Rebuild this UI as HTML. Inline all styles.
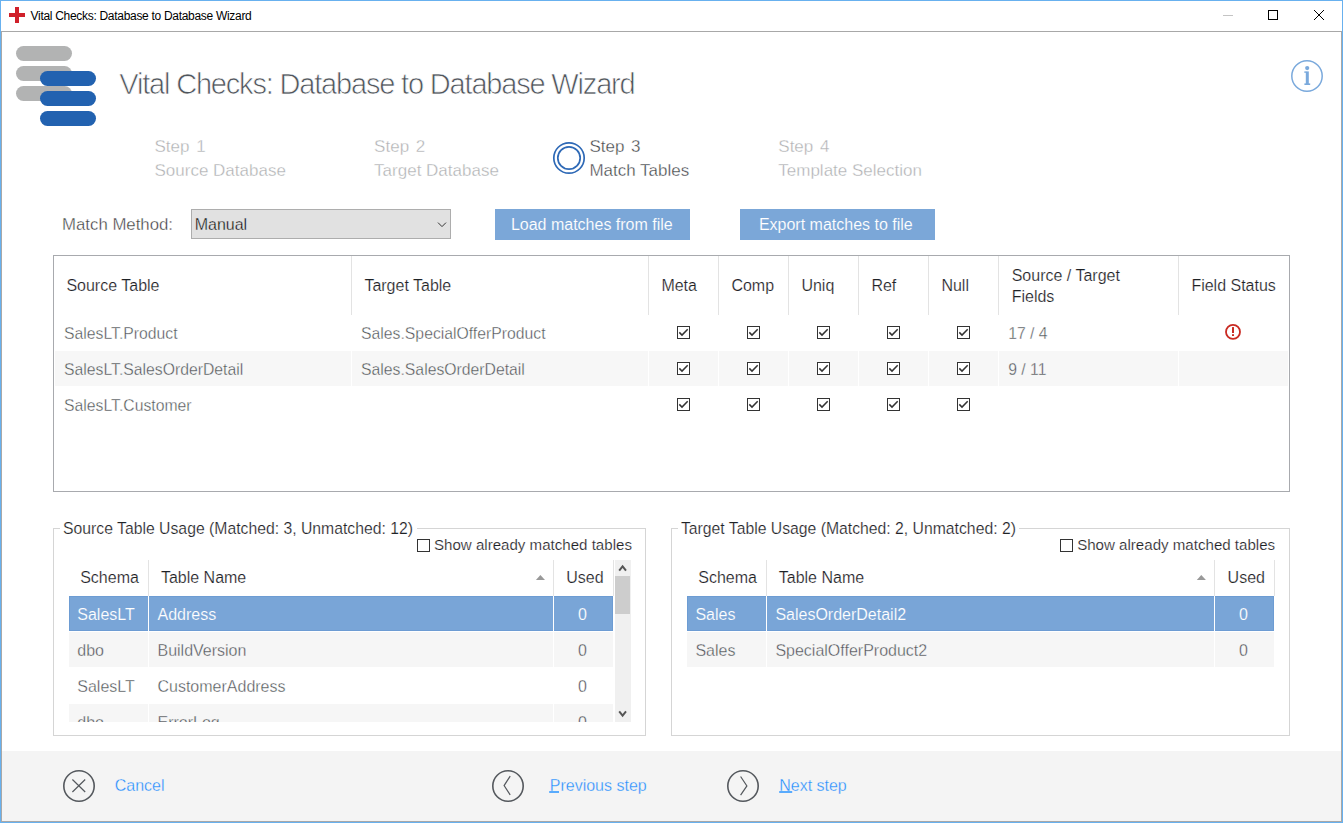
<!DOCTYPE html><html><head><meta charset="utf-8"><style>
*{margin:0;padding:0;box-sizing:border-box}
html,body{width:1343px;height:823px;overflow:hidden;background:#fff;font-family:"Liberation Sans",sans-serif}
.t{position:absolute;white-space:nowrap;line-height:0}
.r{position:absolute}
svg{position:absolute;left:0;top:0}
</style></head><body><div class="r" style="left:0px;top:0px;width:1343px;height:823px;background:#fff;"></div>
<div class="r" style="left:1px;top:31px;width:1341px;height:1px;background:#a8a8a8;"></div>
<div class="r" style="left:1px;top:31px;width:1px;height:791px;background:#a8a8a8;"></div>
<div class="r" style="left:1341px;top:31px;width:1px;height:791px;background:#a8a8a8;"></div>
<div class="r" style="left:1px;top:821px;width:1341px;height:1px;background:#a8a8a8;"></div>
<div class="r" style="left:0px;top:0px;width:1343px;height:1px;background:#68b1ef;"></div>
<div class="r" style="left:0px;top:0px;width:1px;height:823px;background:#68b1ef;"></div>
<div class="r" style="left:1342px;top:0px;width:1px;height:823px;background:#68b1ef;"></div>
<div class="r" style="left:0px;top:822px;width:1343px;height:1px;background:#68b1ef;"></div>
<div class="r" style="left:15px;top:7px;width:4px;height:16px;background:#d0202a;"></div>
<div class="r" style="left:9px;top:13px;width:16px;height:4px;background:#d0202a;"></div>
<div class="t" style="left:30.56px;top:15.74px;font-size:12px;color:#000;letter-spacing:-0.3px">Vital Checks: Database to Database Wizard</div>
<div class="r" style="left:1223px;top:15px;width:10px;height:1px;background:#c4c4c4;"></div>
<div class="r" style="left:1268px;top:10px;width:10px;height:10px;background:transparent;border:1px solid #000"></div>
<div class="r" style="left:16px;top:46px;width:56px;height:15px;background:#b2b3b3;border-radius:7.5px"></div>
<div class="r" style="left:16px;top:66px;width:56px;height:15px;background:#b2b3b3;border-radius:7.5px"></div>
<div class="r" style="left:16px;top:86px;width:56px;height:15px;background:#b2b3b3;border-radius:7.5px"></div>
<div class="r" style="left:40px;top:71px;width:56px;height:15px;background:#2262b0;border-radius:7.5px"></div>
<div class="r" style="left:40px;top:91px;width:56px;height:15px;background:#2262b0;border-radius:7.5px"></div>
<div class="r" style="left:40px;top:111px;width:56px;height:15px;background:#2262b0;border-radius:7.5px"></div>
<div class="t" style="left:119.27px;top:84.05px;font-size:29px;color:#50555c;letter-spacing:-1.18px;-webkit-text-stroke:0.7px #fff">Vital Checks: Database to Database Wizard</div>
<div class="t" style="left:154.51px;top:147.11px;font-size:17px;color:#aeb0b2;-webkit-text-stroke:0.35px #fff;">Step <span style="margin-left:2px">1</span></div>
<div class="t" style="left:154.51px;top:170.91px;font-size:17px;color:#aeb0b2;-webkit-text-stroke:0.35px #fff;">Source Database</div>
<div class="t" style="left:374.11px;top:147.11px;font-size:17px;color:#aeb0b2;-webkit-text-stroke:0.35px #fff;">Step <span style="margin-left:2px">2</span></div>
<div class="t" style="left:374.11px;top:170.91px;font-size:17px;color:#aeb0b2;-webkit-text-stroke:0.35px #fff;">Target Database</div>
<div class="t" style="left:589.41px;top:147.11px;font-size:17px;color:#3e4246;-webkit-text-stroke:0.35px #fff;">Step <span style="margin-left:2px">3</span></div>
<div class="t" style="left:589.41px;top:170.61px;font-size:17px;color:#3e4246;-webkit-text-stroke:0.35px #fff;">Match Tables</div>
<div class="t" style="left:778.31px;top:147.11px;font-size:17px;color:#aeb0b2;-webkit-text-stroke:0.35px #fff;">Step <span style="margin-left:2px">4</span></div>
<div class="t" style="left:778.31px;top:170.91px;font-size:17px;color:#aeb0b2;-webkit-text-stroke:0.35px #fff;">Template Selection</div>
<div class="t" style="left:62.02px;top:225.08px;font-size:16.8px;color:#3a3a3a;-webkit-text-stroke:0.35px #fff;">Match Method:</div>
<div class="r" style="left:191px;top:209px;width:260px;height:30px;background:#e1e1e1;border:1px solid #adadad"></div>
<div class="t" style="left:194.68px;top:225.16px;font-size:16px;color:#000;-webkit-text-stroke:0.35px #e1e1e1;">Manual</div>
<div class="r" style="left:495px;top:209px;width:195px;height:31px;background:#7ba7d8;"></div>
<div class="r" style="left:740px;top:209px;width:195px;height:31px;background:#7ba7d8;"></div>
<div class="t" style="left:510.88px;top:225.36px;font-size:16px;color:#fff;-webkit-text-stroke:0.12px #7ba7d8;">Load matches from file</div>
<div class="t" style="left:758.88px;top:225.36px;font-size:16px;color:#fff;-webkit-text-stroke:0.12px #7ba7d8;">Export matches to file</div>
<div class="r" style="left:53px;top:255px;width:1237px;height:237px;background:#fff;border:1px solid #a8aaae"></div>
<div class="r" style="left:55px;top:351px;width:1233px;height:35px;background:#f7f7f7;"></div>
<div class="r" style="left:351px;top:256px;width:1px;height:59px;background:#e3e3e3;"></div>
<div class="r" style="left:351px;top:351px;width:1px;height:35px;background:#fff;"></div>
<div class="r" style="left:648px;top:256px;width:1px;height:59px;background:#e3e3e3;"></div>
<div class="r" style="left:648px;top:351px;width:1px;height:35px;background:#fff;"></div>
<div class="r" style="left:718px;top:256px;width:1px;height:59px;background:#e3e3e3;"></div>
<div class="r" style="left:718px;top:351px;width:1px;height:35px;background:#fff;"></div>
<div class="r" style="left:788px;top:256px;width:1px;height:59px;background:#e3e3e3;"></div>
<div class="r" style="left:788px;top:351px;width:1px;height:35px;background:#fff;"></div>
<div class="r" style="left:858px;top:256px;width:1px;height:59px;background:#e3e3e3;"></div>
<div class="r" style="left:858px;top:351px;width:1px;height:35px;background:#fff;"></div>
<div class="r" style="left:928px;top:256px;width:1px;height:59px;background:#e3e3e3;"></div>
<div class="r" style="left:928px;top:351px;width:1px;height:35px;background:#fff;"></div>
<div class="r" style="left:998px;top:256px;width:1px;height:59px;background:#e3e3e3;"></div>
<div class="r" style="left:998px;top:351px;width:1px;height:35px;background:#fff;"></div>
<div class="r" style="left:1178px;top:256px;width:1px;height:59px;background:#e3e3e3;"></div>
<div class="r" style="left:1178px;top:351px;width:1px;height:35px;background:#fff;"></div>
<div class="t" style="left:66.38px;top:286.36px;font-size:16px;color:#1e2226;-webkit-text-stroke:0.2px #fff;">Source Table</div>
<div class="t" style="left:364.38px;top:286.36px;font-size:16px;color:#1e2226;-webkit-text-stroke:0.2px #fff;">Target Table</div>
<div class="t" style="left:661.38px;top:286.36px;font-size:16px;color:#1e2226;-webkit-text-stroke:0.2px #fff;">Meta</div>
<div class="t" style="left:731.38px;top:286.36px;font-size:16px;color:#1e2226;-webkit-text-stroke:0.2px #fff;">Comp</div>
<div class="t" style="left:801.38px;top:286.36px;font-size:16px;color:#1e2226;-webkit-text-stroke:0.2px #fff;">Uniq</div>
<div class="t" style="left:871.38px;top:286.36px;font-size:16px;color:#1e2226;-webkit-text-stroke:0.2px #fff;">Ref</div>
<div class="t" style="left:941.38px;top:286.36px;font-size:16px;color:#1e2226;-webkit-text-stroke:0.2px #fff;">Null</div>
<div class="t" style="left:1011.68px;top:275.76px;font-size:16px;color:#1e2226;-webkit-text-stroke:0.2px #fff;">Source / Target</div>
<div class="t" style="left:1011.68px;top:297.36px;font-size:16px;color:#1e2226;-webkit-text-stroke:0.2px #fff;">Fields</div>
<div class="t" style="left:1191.38px;top:286.36px;font-size:16px;color:#1e2226;-webkit-text-stroke:0.2px #fff;">Field Status</div>
<div class="t" style="left:64.10px;top:334.44px;font-size:15.75px;color:#4c5054;-webkit-text-stroke:0.35px #fff;">SalesLT.Product</div>
<div class="t" style="left:361.10px;top:334.44px;font-size:15.75px;color:#4c5054;-webkit-text-stroke:0.35px #fff;">Sales.SpecialOfferProduct</div>
<div class="t" style="left:1008.20px;top:334.44px;font-size:15.75px;color:#4c5054;-webkit-text-stroke:0.35px #fff;">17 / 4</div>
<div class="t" style="left:64.10px;top:370.44px;font-size:15.75px;color:#4c5054;-webkit-text-stroke:0.35px #f7f7f7;">SalesLT.SalesOrderDetail</div>
<div class="t" style="left:361.10px;top:370.44px;font-size:15.75px;color:#4c5054;-webkit-text-stroke:0.35px #f7f7f7;">Sales.SalesOrderDetail</div>
<div class="t" style="left:1008.20px;top:370.44px;font-size:15.75px;color:#4c5054;-webkit-text-stroke:0.35px #f7f7f7;">9 / 11</div>
<div class="t" style="left:64.10px;top:406.44px;font-size:15.75px;color:#4c5054;-webkit-text-stroke:0.35px #fff;">SalesLT.Customer</div>
<div class="r" style="left:53px;top:528px;width:593px;height:208px;background:transparent;border:1px solid #d5d5d5"></div>
<div class="r" style="left:671px;top:528px;width:619px;height:208px;background:transparent;border:1px solid #d5d5d5"></div>
<div class="r" style="left:60px;top:520px;width:357px;height:16px;background:#fff;"></div>
<div class="r" style="left:678px;top:520px;width:341px;height:16px;background:#fff;"></div>
<div class="t" style="left:63.10px;top:529.44px;font-size:15.75px;color:#1e2226;-webkit-text-stroke:0.2px #fff;">Source Table Usage (Matched: 3, Unmatched: 12)</div>
<div class="t" style="left:680.90px;top:529.44px;font-size:15.75px;color:#1e2226;-webkit-text-stroke:0.2px #fff;">Target Table Usage (Matched: 2, Unmatched: 2)</div>
<div class="r" style="left:417px;top:539px;width:13px;height:13px;background:#fff;border:1px solid #333"></div>
<div class="t" style="left:433.94px;top:545.17px;font-size:15.1px;color:#1e2226;-webkit-text-stroke:0.2px #fff;">Show already matched tables</div>
<div class="r" style="left:1060px;top:539px;width:13px;height:13px;background:#fff;border:1px solid #333"></div>
<div class="t" style="left:1077.14px;top:545.17px;font-size:15.1px;color:#1e2226;-webkit-text-stroke:0.2px #fff;">Show already matched tables</div>
<div class="r" style="left:69px;top:559px;width:545px;height:163px;overflow:hidden">
<div class="r" style="left:0px;top:37px;width:544px;height:35px;background:#79a5d7;border:1px solid #6d9cd3"></div>
<div class="r" style="left:0px;top:73px;width:544px;height:35px;background:#f6f6f6;"></div>
<div class="r" style="left:0px;top:145px;width:544px;height:35px;background:#f6f6f6;"></div>
<div class="r" style="left:79px;top:1px;width:1px;height:36px;background:#e3e3e3;"></div>
<div class="r" style="left:79px;top:37px;width:1px;height:143px;background:#fff;"></div>
<div class="r" style="left:484px;top:1px;width:1px;height:36px;background:#e3e3e3;"></div>
<div class="r" style="left:484px;top:37px;width:1px;height:143px;background:#fff;"></div>
<div class="r" style="left:544px;top:1px;width:1px;height:36px;background:#e3e3e3;"></div>
</div>
<div class="t" style="left:80.18px;top:578.36px;font-size:16px;color:#1e2226;-webkit-text-stroke:0.2px #fff;">Schema</div>
<div class="t" style="left:160.88px;top:578.36px;font-size:16px;color:#1e2226;-webkit-text-stroke:0.2px #fff;">Table Name</div>
<div class="t" style="left:566.18px;top:578.36px;font-size:16px;color:#1e2226;-webkit-text-stroke:0.2px #fff;">Used</div>
<div class="t" style="left:77.28px;top:615.36px;font-size:16px;color:#fff;-webkit-text-stroke:0.15px #79a5d7;">SalesLT</div>
<div class="t" style="left:157.48px;top:615.36px;font-size:16px;color:#fff;-webkit-text-stroke:0.15px #79a5d7;">Address</div>
<div class="t" style="left:577.98px;top:615.36px;font-size:16px;color:#fff;-webkit-text-stroke:0.15px #79a5d7;">0</div>
<div class="t" style="left:77.28px;top:651.36px;font-size:16px;color:#4c5054;-webkit-text-stroke:0.35px #f6f6f6;">dbo</div>
<div class="t" style="left:157.48px;top:651.36px;font-size:16px;color:#4c5054;-webkit-text-stroke:0.35px #f6f6f6;">BuildVersion</div>
<div class="t" style="left:577.98px;top:651.36px;font-size:16px;color:#4c5054;-webkit-text-stroke:0.35px #f6f6f6;">0</div>
<div class="t" style="left:77.28px;top:687.36px;font-size:16px;color:#4c5054;-webkit-text-stroke:0.35px #fff;">SalesLT</div>
<div class="t" style="left:157.48px;top:687.36px;font-size:16px;color:#4c5054;-webkit-text-stroke:0.35px #fff;">CustomerAddress</div>
<div class="t" style="left:577.98px;top:687.36px;font-size:16px;color:#4c5054;-webkit-text-stroke:0.35px #fff;">0</div>
<div class="t" style="left:77.28px;top:723.36px;font-size:16px;color:#4c5054;-webkit-text-stroke:0.35px #f6f6f6;">dbo</div>
<div class="t" style="left:157.48px;top:723.36px;font-size:16px;color:#4c5054;-webkit-text-stroke:0.35px #f6f6f6;">ErrorLog</div>
<div class="t" style="left:577.98px;top:723.36px;font-size:16px;color:#4c5054;-webkit-text-stroke:0.35px #f6f6f6;">0</div>
<div class="r" style="left:69px;top:722px;width:545px;height:12px;background:#fff;"></div>
<div class="r" style="left:615px;top:560px;width:16px;height:162px;background:#f0f0f0;"></div>
<div class="r" style="left:615px;top:576px;width:15px;height:38px;background:#cdcdcd;"></div>
<div class="r" style="left:687px;top:596px;width:587px;height:35px;background:#79a5d7;border:1px solid #6d9cd3"></div>
<div class="r" style="left:687px;top:632px;width:587px;height:35px;background:#f6f6f6;"></div>
<div class="r" style="left:766px;top:560px;width:1px;height:36px;background:#e3e3e3;"></div>
<div class="r" style="left:766px;top:596px;width:1px;height:71px;background:#fff;"></div>
<div class="r" style="left:1214px;top:560px;width:1px;height:36px;background:#e3e3e3;"></div>
<div class="r" style="left:1214px;top:596px;width:1px;height:71px;background:#fff;"></div>
<div class="r" style="left:1274px;top:560px;width:1px;height:36px;background:#e3e3e3;"></div>
<div class="t" style="left:698.28px;top:578.36px;font-size:16px;color:#1e2226;-webkit-text-stroke:0.2px #fff;">Schema</div>
<div class="t" style="left:778.78px;top:578.36px;font-size:16px;color:#1e2226;-webkit-text-stroke:0.2px #fff;">Table Name</div>
<div class="t" style="left:1227.58px;top:578.36px;font-size:16px;color:#1e2226;-webkit-text-stroke:0.2px #fff;">Used</div>
<div class="t" style="left:695.38px;top:615.36px;font-size:16px;color:#fff;-webkit-text-stroke:0.15px #79a5d7;">Sales</div>
<div class="t" style="left:775.38px;top:615.36px;font-size:16px;color:#fff;-webkit-text-stroke:0.15px #79a5d7;">SalesOrderDetail2</div>
<div class="t" style="left:1239.08px;top:615.36px;font-size:16px;color:#fff;-webkit-text-stroke:0.15px #79a5d7;">0</div>
<div class="t" style="left:695.38px;top:651.36px;font-size:16px;color:#4c5054;-webkit-text-stroke:0.35px #f6f6f6;">Sales</div>
<div class="t" style="left:775.38px;top:651.36px;font-size:16px;color:#4c5054;-webkit-text-stroke:0.35px #f6f6f6;">SpecialOfferProduct2</div>
<div class="t" style="left:1239.08px;top:651.36px;font-size:16px;color:#4c5054;-webkit-text-stroke:0.35px #f6f6f6;">0</div>
<div class="r" style="left:2px;top:751px;width:1339px;height:70px;background:#f4f4f4;"></div>
<div class="t" style="left:114.68px;top:786.36px;font-size:16px;color:#1f8cff;-webkit-text-stroke:0.3px #f4f4f4">Cancel</div>
<div class="t" style="left:549.78px;top:786.36px;font-size:16px;color:#1f8cff;-webkit-text-stroke:0.3px #f4f4f4">Previous step</div>
<div class="t" style="left:779.18px;top:786.36px;font-size:16px;color:#1f8cff;-webkit-text-stroke:0.3px #f4f4f4">Next step</div>
<svg width="1343" height="823" viewBox="0 0 1343 823"><rect x="677.5" y="326.5" width="12" height="12" fill="#fff" stroke="#333" stroke-width="1"/><polyline points="679.3,332.4 682,335.1 687.7,329.3" fill="none" stroke="#333" stroke-width="1.5"/><rect x="747.5" y="326.5" width="12" height="12" fill="#fff" stroke="#333" stroke-width="1"/><polyline points="749.3,332.4 752,335.1 757.7,329.3" fill="none" stroke="#333" stroke-width="1.5"/><rect x="817.5" y="326.5" width="12" height="12" fill="#fff" stroke="#333" stroke-width="1"/><polyline points="819.3,332.4 822,335.1 827.7,329.3" fill="none" stroke="#333" stroke-width="1.5"/><rect x="887.5" y="326.5" width="12" height="12" fill="#fff" stroke="#333" stroke-width="1"/><polyline points="889.3,332.4 892,335.1 897.7,329.3" fill="none" stroke="#333" stroke-width="1.5"/><rect x="957.5" y="326.5" width="12" height="12" fill="#fff" stroke="#333" stroke-width="1"/><polyline points="959.3,332.4 962,335.1 967.7,329.3" fill="none" stroke="#333" stroke-width="1.5"/><rect x="677.5" y="362.5" width="12" height="12" fill="#fff" stroke="#333" stroke-width="1"/><polyline points="679.3,368.4 682,371.1 687.7,365.3" fill="none" stroke="#333" stroke-width="1.5"/><rect x="747.5" y="362.5" width="12" height="12" fill="#fff" stroke="#333" stroke-width="1"/><polyline points="749.3,368.4 752,371.1 757.7,365.3" fill="none" stroke="#333" stroke-width="1.5"/><rect x="817.5" y="362.5" width="12" height="12" fill="#fff" stroke="#333" stroke-width="1"/><polyline points="819.3,368.4 822,371.1 827.7,365.3" fill="none" stroke="#333" stroke-width="1.5"/><rect x="887.5" y="362.5" width="12" height="12" fill="#fff" stroke="#333" stroke-width="1"/><polyline points="889.3,368.4 892,371.1 897.7,365.3" fill="none" stroke="#333" stroke-width="1.5"/><rect x="957.5" y="362.5" width="12" height="12" fill="#fff" stroke="#333" stroke-width="1"/><polyline points="959.3,368.4 962,371.1 967.7,365.3" fill="none" stroke="#333" stroke-width="1.5"/><rect x="677.5" y="398.5" width="12" height="12" fill="#fff" stroke="#333" stroke-width="1"/><polyline points="679.3,404.4 682,407.1 687.7,401.3" fill="none" stroke="#333" stroke-width="1.5"/><rect x="747.5" y="398.5" width="12" height="12" fill="#fff" stroke="#333" stroke-width="1"/><polyline points="749.3,404.4 752,407.1 757.7,401.3" fill="none" stroke="#333" stroke-width="1.5"/><rect x="817.5" y="398.5" width="12" height="12" fill="#fff" stroke="#333" stroke-width="1"/><polyline points="819.3,404.4 822,407.1 827.7,401.3" fill="none" stroke="#333" stroke-width="1.5"/><rect x="887.5" y="398.5" width="12" height="12" fill="#fff" stroke="#333" stroke-width="1"/><polyline points="889.3,404.4 892,407.1 897.7,401.3" fill="none" stroke="#333" stroke-width="1.5"/><rect x="957.5" y="398.5" width="12" height="12" fill="#fff" stroke="#333" stroke-width="1"/><polyline points="959.3,404.4 962,407.1 967.7,401.3" fill="none" stroke="#333" stroke-width="1.5"/><circle cx="1233" cy="331.9" r="7.0" fill="none" stroke="#c92a22" stroke-width="1.8"/><rect x="1232" y="327.1" width="2" height="5.9" fill="#c92a22"/><rect x="1232" y="334.2" width="2" height="1.8" fill="#c92a22"/><circle cx="79" cy="786" r="15.2" fill="none" stroke="#54585d" stroke-width="1.6"/><path d="M72.4 779.5 L85.2 792 M85.2 779.5 L72.4 792" stroke="#54585d" stroke-width="1.2"/><circle cx="508" cy="786" r="15.2" fill="none" stroke="#54585d" stroke-width="1.6"/><path d="M510.2 776.1 L504.1 785.6 L510.2 794.9" fill="none" stroke="#54585d" stroke-width="1.2"/><circle cx="743" cy="786" r="15.2" fill="none" stroke="#54585d" stroke-width="1.6"/><path d="M740.6 776.5 L746.9 785.9 L740.6 795.2" fill="none" stroke="#54585d" stroke-width="1.2"/><rect x="549.2" y="791.2" width="9.8" height="1.6" fill="#3399ff"/><rect x="779.2" y="791.2" width="13" height="1.6" fill="#3399ff"/><circle cx="569" cy="158" r="15.2" fill="none" stroke="#2e69b6" stroke-width="1.7"/><circle cx="569" cy="158" r="11.2" fill="none" stroke="#2e69b6" stroke-width="1.7"/><circle cx="1307" cy="76" r="15.2" fill="none" stroke="#7aa9dc" stroke-width="1.5"/><circle cx="1307.2" cy="68.1" r="2.1" fill="#7aa9dc"/><rect x="1305.8" y="71.4" width="3" height="13" fill="#7aa9dc"/><rect x="1304.3" y="71.4" width="2" height="1.4" fill="#7aa9dc"/><rect x="1304.4" y="83.4" width="5.8" height="1.6" fill="#7aa9dc"/><path d="M1314 10 L1324 20 M1324 10 L1314 20" stroke="#000" stroke-width="1"/><path d="M438 222.6 L442 226.6 L446 222.6" fill="none" stroke="#333" stroke-width="1"/><path d="M535.9 580 L540.4 575 L545 580 Z" fill="#999"/><path d="M1196.8 580 L1201.3 575 L1205.9 580 Z" fill="#999"/><path d="M619.2 570.6 L622.6 566.4 L626 570.6" fill="none" stroke="#555" stroke-width="2"/><path d="M619.2 711.4 L622.6 715.6 L626 711.4" fill="none" stroke="#555" stroke-width="2"/></svg></body></html>
